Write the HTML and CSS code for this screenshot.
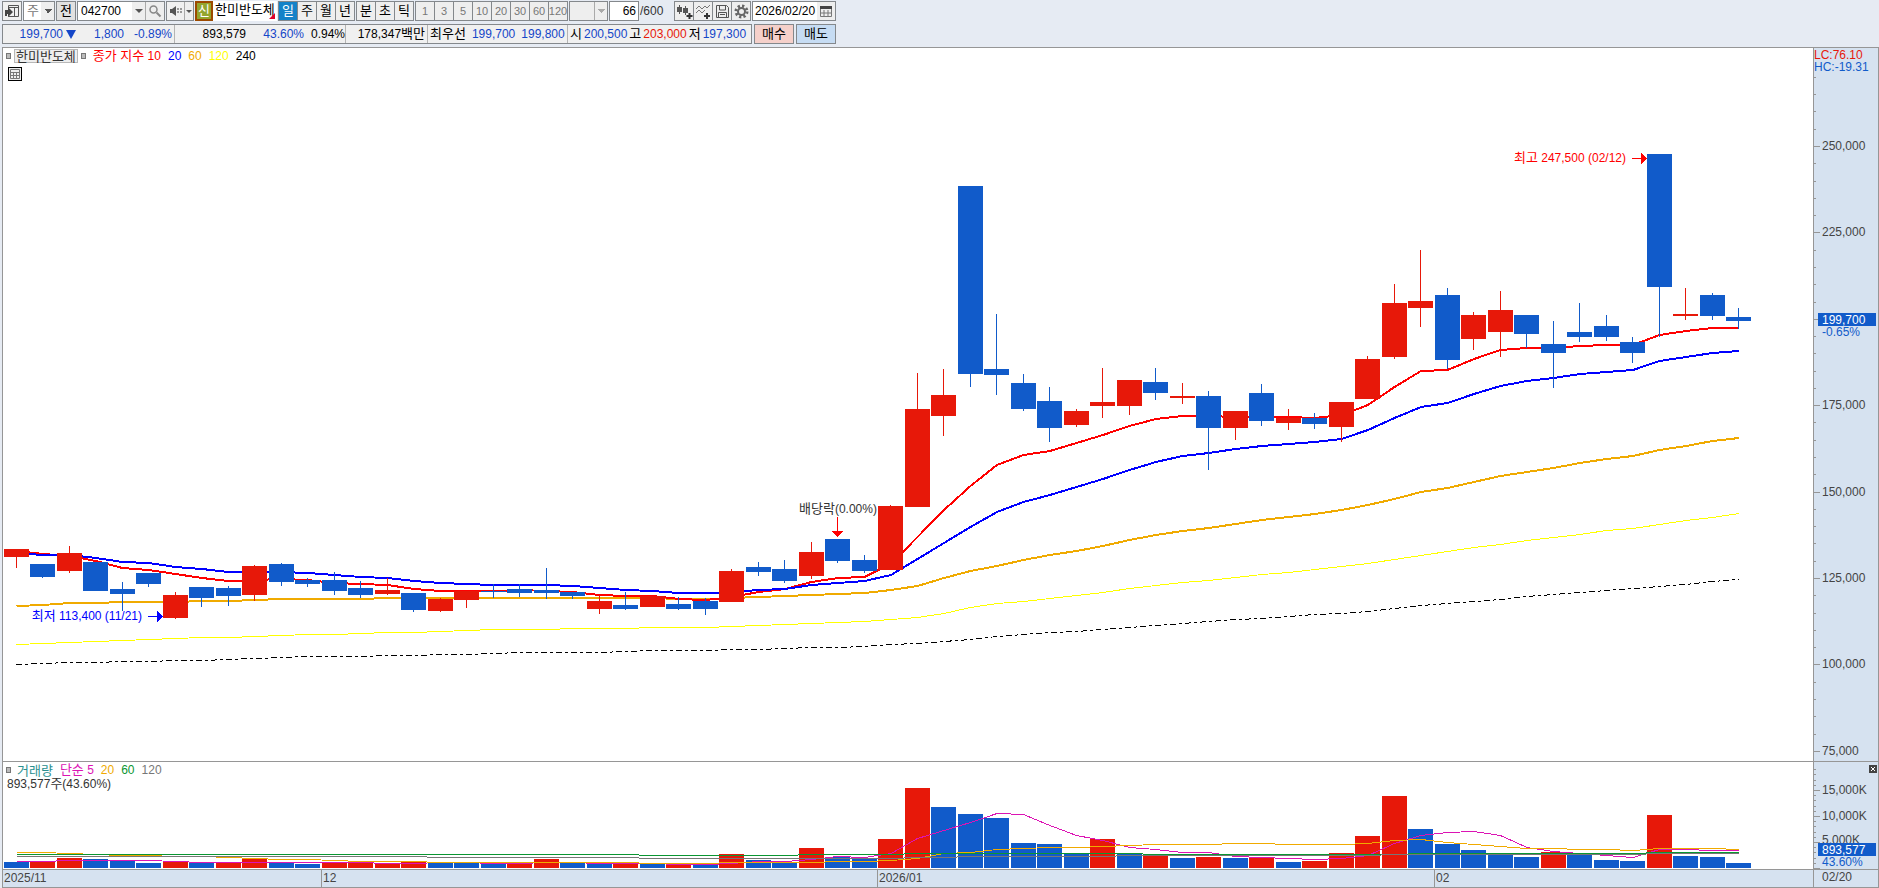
FILE: index.html
```html
<!DOCTYPE html>
<html lang="ko">
  <head>
    <meta charset="utf-8">
    <title>한미반도체 042700</title>
    <link rel="stylesheet" href="styles.css">
  </head>
  <body>
    <header class="toolbar">
      <div class="row">
        <button class="box icon" aria-label="창">
          <svg width="16" height="16" viewBox="0 0 16 16"><path d="M4.5 5V2.500h10v11h-10V12M5 4.500h9M10.500 5v8" fill="none" stroke="#555"/><path d="M1 13V7h3V4l5 5-5 5v-3H3v2z" fill="#444"/></svg>
        </button>
        <select class="box market" aria-label="시장"><option>주</option></select>
        <button class="box key">전</button>
        <div class="box code">
          <input type="text" value="042700" aria-label="종목코드">
          <button class="drop" aria-label="종목 목록"></button>
          <button class="search" aria-label="검색">
            <svg width="14" height="14" viewBox="0 0 14 14"><circle cx="5.5" cy="5.5" r="3.5" fill="none" stroke="#888" stroke-width="1.5"/><path d="M8.5 8.5l4 4" stroke="#888" stroke-width="2"/></svg>
          </button>
        </div>
        <div class="box sound">
          <button class="mute" aria-label="소리">
            <svg width="14" height="12" viewBox="0 0 14 12"><path d="M1 4h2l4-3v10L3 8H1z" fill="#555"/><path d="M8 4h2M8 7h2M11 4h2M11 7h2" stroke="#999" stroke-width="2"/></svg>
          </button>
          <button class="drop" aria-label="소리 설정"></button>
        </div>
        <div class="stock">
          <span class="badge">신</span>
          <span class="name">한미반도체</span>
        </div>
        <div class="group">
          <button class="on">일</button><button>주</button><button>월</button><button>년</button>
        </div>
        <div class="group">
          <button>분</button><button>초</button><button>틱</button>
        </div>
        <div class="group muted">
          <button>1</button><button>3</button><button>5</button><button>10</button><button>20</button><button>30</button><button>60</button><button>120</button>
        </div>
        <select class="box unit" aria-label="단위" disabled><option></option></select>
        <label class="count"><input class="box" type="text" value="66" aria-label="표시 봉수"><span>/600</span></label>
        <div class="tools">
          <button aria-label="봉 추가">
            <svg width="17" height="17" viewBox="0 0 17 17"><path d="M3.5 2v9M9.5 3v9" stroke="#555"/><path d="M1 4h5v5H1zM7 5h5v5H7z" fill="#555"/><path d="M13.500 10v6M10.500 13h6" stroke="#333" stroke-width="2"/></svg>
          </button>
          <button aria-label="지표 추가">
            <svg width="17" height="17" viewBox="0 0 17 17"><path d="M1 6l3-3 3 3 3-3 2 2 3-3M1 10l3-3 3 3 3-3" fill="none" stroke="#777"/><path d="M12 10v6M9 13h6" stroke="#333" stroke-width="2"/></svg>
          </button>
          <button aria-label="저장">
            <svg width="17" height="17" viewBox="0 0 17 17"><path d="M2.5 2.500h10l2 2v10h-12zM5.500 3v4h6V3M4.500 14V9.500h8V14M6 11.500h5" fill="none" stroke="#555"/></svg>
          </button>
          <button aria-label="설정">
            <svg width="17" height="17" viewBox="0 0 17 17"><circle cx="8.5" cy="8.5" r="5.5" fill="none" stroke="#666" stroke-width="3" stroke-dasharray="2.2 2.1"/><circle cx="8.5" cy="8.5" r="3.5" fill="none" stroke="#666" stroke-width="2"/></svg>
          </button>
        </div>
        <div class="box date">
          <input type="text" value="2026/02/20" aria-label="날짜">
          <button class="calendar" aria-label="달력">
            <svg width="12" height="12" viewBox="0 0 12 12"><path d="M.5 1.500h11v10H.5zM4 5v6M8 5v6M1 8h10" fill="none" stroke="#777"/><path d="M0 1h12v3H0z" fill="#444"/></svg>
          </button>
        </div>
      </div>

      <div class="row">
        <div class="box quote">
          <div class="cell trade down">
            <span class="w-price">199,700</span><i class="triangle"></i><span class="w-change">1,800</span><span class="w-change">-0.89%</span>
          </div>
          <div class="cell volume">
            <span class="w-volume">893,579</span><span class="w-rate down">43.60%</span><span class="w-turn">0.94%</span>
          </div>
          <div class="cell amount">178,347<span class="ko">백만</span></div>
          <div class="cell best"><span class="ko">최우선</span><span class="down">199,700</span><span class="down">199,800</span></div>
          <div class="cell ohl">
            <span class="ko">시</span><span class="down">200,500</span><span class="ko">고</span><span class="up">203,000</span><span class="ko">저</span><span class="down">197,300</span>
          </div>
        </div>
        <button class="box order buy">매수</button>
        <button class="box order sell">매도</button>
      </div>
    </header>

    <main class="chart">
      <section class="panel">
        <svg class="plot" id="price-plot"></svg>
        <div class="legend">
          <i class="knob"></i><span class="tag ko">한미반도체</span><i class="knob"></i>
          <span class="ma10"><span class="ko">종가 지수</span> 10</span><span class="ma20">20</span><span class="ma60">60</span><span class="ma120">120</span><span>240</span>
        </div>
        <button class="grid-button" aria-label="표 보기">
          <svg width="10" height="10" viewBox="0 0 10 10"><path d="M.5.5h9v9h-9zM0 3.500h10M0 6.500h10M3.500 3v7M6.500 3v7" fill="none" stroke="#777"/></svg>
        </button>
      </section>
      <section class="axis"><svg class="plot" id="price-axis"></svg></section>

      <section class="panel">
        <svg class="plot" id="volume-plot"></svg>
        <div class="legend">
          <i class="knob"></i><span class="vol-title ko">거래량</span><span class="vol5"><span class="ko">단순</span> 5</span><span class="ma60">20</span><span class="vol60">60</span><span class="vol120">120</span>
        </div>
        <div class="vol-value">893,577<span class="ko">주</span>(43.60%)</div>
      </section>
      <section class="axis">
        <svg class="plot" id="volume-axis"></svg>
        <button class="close" aria-label="닫기"><svg width="8" height="8" viewBox="0 0 8 8"><path d="M2 2l4 4M6 2l-4 4" stroke="#fff"/></svg></button>
      </section>

      <section class="axis"><svg class="plot" id="date-axis"></svg></section>
      <section class="axis last-date">02/20</section>
    </main>
    <script src="script.js"></script>
  </body>
</html>
```
FILE: styles.css
```css
* {
  box-sizing: border-box;
}

body {
  margin: 0;
  min-height: 100vh;
  display: flex;
  flex-direction: column;
  background: #e6ebf3;
  color: #000;
  font-family: "Liberation Sans", "Noto Sans CJK KR", sans-serif;
  font-size: 12px;
  line-height: 16px;
}

button,
input,
select {
  margin: 0;
  padding: 0;
  border: 0;
  border-radius: 0;
  background: transparent;
  color: inherit;
  font: inherit;
}

button {
  display: flex;
  align-items: center;
  justify-content: center;
}

svg {
  display: block;
}

/* Hangul runs a size larger than the digits beside it */
.ko,
.key,
.market,
.stock,
.group,
.order {
  font-size: 13px;
}

/* toolbar */

.toolbar {
  display: flex;
  flex-direction: column;
  gap: 3px;
  height: 47px;
  padding: 1px 0 0 2px;
}

.row {
  display: flex;
  gap: 1px;
  height: 20px;
  white-space: nowrap;
}

.row > * {
  flex-shrink: 0;
}

.box {
  display: flex;
  align-items: center;
  height: 20px;
  border: 1px solid #84888c;
  background-color: #f0f0f0;
}

.icon,
.key {
  width: 20px;
}

.key {
  background: #e1e1e1;
}

.market {
  width: 32px;
  padding-left: 3px;
  appearance: none;
  color: #777;
  background:
    conic-gradient(from -45deg at 50% 100%, #555 90deg, transparent 0) no-repeat 20px 7px / 8px 4px,
    linear-gradient(90deg, #fff 17px, #eee 17px);
}

.drop {
  width: 13px;
  height: 18px;
  background: #eee;
}

.drop::after {
  content: "";
  border: 4px solid transparent;
  border-top-color: #555;
  border-bottom: 0;
}

.code {
  width: 88px;
  background: #fff;
}

.code input {
  width: 54px;
  padding-left: 3px;
}

.search {
  width: 19px;
  height: 18px;
  border-left: 1px solid #aaa;
  background: #eee;
}

.sound {
  width: 28px;
}

.mute {
  width: 17px;
}

.sound .drop {
  width: 9px;
  border-left: 1px solid #aaa;
}

.sound .drop::after {
  border-width: 3px 3px 0;
}

.stock {
  display: flex;
  position: relative;
  width: 82px;
  background: #fff;
}

.badge {
  width: 18px;
  border: 2px solid #9c4a00;
  background: #93a52e;
  color: #fff;
  text-align: center;
}

.name {
  padding: 1px 0 0 2px;
}

.stock::after {
  content: "";
  position: absolute;
  right: 2px;
  bottom: 2px;
  border: 3px solid #e0002a;
  border-top-color: transparent;
  border-left-color: transparent;
}

.group {
  display: flex;
  gap: 1px;
  padding: 1px;
  background: #84888c;
}

.group button {
  width: 18px;
  background: #eee;
}

.group .on {
  background: #1482c8;
  color: #fff;
}

.muted button {
  color: #777;
  font-size: 11px;
}

.unit {
  width: 39px;
  appearance: none;
  opacity: 1;
  background:
    conic-gradient(from -45deg at 50% 100%, #aaa 90deg, transparent 0) no-repeat 27px 7px / 8px 4px,
    linear-gradient(90deg, #eee 24px, #aaa 24px 25px, #eee 25px);
}

.count {
  display: flex;
  align-items: center;
  width: 64px;
  gap: 1px;
  color: #333;
}

.count input {
  width: 30px;
  background: #fff;
  padding-right: 2px;
  text-align: right;
  color: #000;
}

.tools {
  display: flex;
  gap: 1px;
  padding: 1px;
  width: 77px;
  background: #84888c;
}

.tools button {
  width: 18px;
  background: #eee;
}

.date {
  width: 84px;
  background: #fff;
}

.date input {
  width: 64px;
  padding-left: 2px;
}

.calendar {
  width: 18px;
  height: 18px;
  background: #eee;
}

/* quote line */

.quote {
  width: 750px;
  align-items: stretch;
  margin-right: 1px;
}

.cell {
  display: flex;
  flex-shrink: 0;
  align-items: center;
  border-right: 1px solid #b4b4b4;
  text-align: right;
}

.cell:last-child {
  border-right: 0;
}

.down {
  color: #1446c8;
}

.up {
  color: #e71809;
}

.trade {
  width: 172px;
}

.triangle {
  margin-left: 3px;
  border: 5px solid transparent;
  border-top: 9px solid #1446c8;
  border-bottom: 0;
}

.w-price {
  width: 60px;
}

.w-change {
  width: 48px;
}

.volume {
  width: 171px;
}

.w-volume {
  width: 71px;
}

.w-rate {
  width: 58px;
}

.w-turn {
  width: 41px;
}

.amount {
  width: 82px;
  justify-content: flex-end;
  padding-right: 2px;
}

.best {
  width: 140px;
  gap: 6px;
  padding-left: 2px;
}

.ohl {
  gap: 2px;
  padding-left: 2px;
}

.order {
  width: 40px;
  margin-right: 1px;
}

.buy {
  background: #f5d0ca;
}

.sell {
  background: #c6dcf3;
}

/* chart */

.chart {
  flex: 1;
  display: grid;
  grid-template-columns: minmax(0, 1fr) 64px;
  grid-template-rows: minmax(0, 713fr) minmax(0, 107fr) 17px;
  gap: 1px;
  margin-left: 2px;
  padding: 1px;
  background: #969696;
  line-height: 13px;
}

.panel,
.axis {
  position: relative;
  background: #fff;
}

.axis {
  background: #d6e2f0;
  color: #444;
}

.plot {
  position: absolute;
  inset: 0;
  width: 100%;
  height: 100%;
  shape-rendering: crispEdges;
}

.legend {
  position: relative;
  display: flex;
  align-items: center;
  gap: 7px;
  height: 15px;
  padding: 1px 0 0 3px;
  white-space: nowrap;
}

.knob {
  width: 5px;
  height: 6px;
  border: 1px solid #777;
  background: #bbb;
}

.tag {
  display: flex;
  align-items: center;
  margin: 0 -4px;
  padding: 0 1px;
  height: 14px;
  border: 1px solid #b8b8b8;
  background: #eee;
  color: #333;
}

.ma10 {
  color: #f00;
}

.ma20 {
  color: #00f;
}

.ma60 {
  color: #f0aa00;
}

.ma120 {
  color: #ff0;
}

.vol-title {
  margin-left: -1px;
  color: #2a9090;
}

.vol5 {
  color: #dc14b4;
}

.vol60 {
  color: #0a9632;
}

.vol120 {
  color: #777;
}

.vol-value {
  position: relative;
  padding-left: 4px;
  color: #333;
}

.grid-button {
  position: relative;
  width: 14px;
  height: 14px;
  margin: 4px 0 0 5px;
  border: 1px solid #000;
  background: #eee;
}

.close {
  position: absolute;
  top: 3px;
  right: 1px;
  width: 8px;
  height: 8px;
  background: #444;
}

.last-date {
  padding: 1px 0 0 8px;
}

/* drawing */

.rise {
  fill: #e71809;
}

.fall {
  fill: #115bca;
}

.line {
  fill: none;
  stroke-width: 2;
}

.thin {
  stroke-width: 1;
}

.s-red { stroke: #f00; }
.s-blue { stroke: #00f; }
.s-orange { stroke: #f0aa00; }
.s-yellow { stroke: #ff0; }
.s-black { stroke: #000; stroke-dasharray: 6 3 3 3; }
.s-pink { stroke: #dc14b4; }
.s-green { stroke: #0a9632; }
.s-grey { stroke: #777; }

.tick {
  fill: #969696;
}

.t-axis { fill: #444; }
.t-red { fill: #f00; }
.t-blue { fill: #00f; }
.t-dark { fill: #333; }
.t-white { fill: #fff; }
.t-rise { fill: #e71809; }
.t-fall { fill: #115bca; }
```
FILE: script.js
```js
const NS = "http://www.w3.org/2000/svg";

// direction, high, body top, body bottom, low
const candles = [
  ["r", 549, 549, 557, 568], ["b", 564, 564, 577, 578], ["r", 546, 553, 571, 573], ["b", 562, 562, 591, 591],
  ["b", 582, 589, 594, 611], ["b", 573, 573, 584, 587], ["r", 592, 595, 618, 619], ["b", 587, 587, 598, 607],
  ["b", 586, 588, 596, 606], ["r", 565, 566, 595, 601], ["b", 563, 564, 582, 586], ["b", 578, 580, 584, 587],
  ["b", 572, 580, 591, 595], ["b", 581, 588, 595, 598], ["r", 578, 590, 594, 595], ["b", 593, 593, 610, 612],
  ["r", 598, 599, 611, 612], ["r", 591, 591, 600, 608], ["b", 584, 591, 592, 598], ["b", 584, 589, 593, 597],
  ["b", 568, 590, 593, 599], ["b", 592, 592, 596, 599], ["r", 595, 601, 609, 614], ["b", 592, 605, 609, 610],
  ["r", 596, 596, 607, 607], ["b", 597, 604, 609, 610], ["b", 598, 601, 609, 615], ["r", 569, 571, 602, 602],
  ["b", 562, 567, 572, 576], ["b", 560, 569, 581, 583], ["r", 542, 552, 576, 579], ["b", 539, 539, 561, 563],
  ["b", 555, 560, 571, 573], ["r", 505, 506, 570, 570], ["r", 373, 409, 507, 507], ["r", 369, 395, 416, 436],
  ["b", 186, 186, 374, 387], ["b", 314, 369, 375, 395], ["b", 374, 383, 409, 411], ["b", 387, 401, 428, 442],
  ["r", 409, 411, 425, 427], ["r", 368, 402, 406, 418], ["r", 380, 380, 406, 415], ["b", 368, 382, 393, 400],
  ["r", 383, 396, 398, 404], ["b", 391, 396, 428, 470], ["r", 411, 411, 428, 440], ["b", 384, 393, 421, 426],
  ["r", 409, 418, 423, 430], ["b", 413, 418, 424, 429], ["r", 402, 402, 427, 442], ["r", 356, 359, 399, 399],
  ["r", 284, 303, 357, 359], ["r", 250, 301, 308, 327], ["b", 288, 295, 360, 369], ["r", 312, 315, 339, 350],
  ["r", 291, 310, 332, 357], ["b", 315, 315, 334, 348], ["b", 321, 344, 353, 388], ["b", 303, 332, 337, 342],
  ["b", 315, 326, 337, 341], ["b", 337, 342, 353, 363], ["b", 154, 154, 287, 337], ["r", 288, 314, 316, 320],
  ["b", 293, 295, 316, 320], ["b", 308, 317, 321, 329],
];

const averages = {
  "thin s-black": [664, 663, 662, 662, 661, 661, 660, 660, 659, 658, 657, 656, 656, 656, 655, 655, 654, 654, 653, 652, 652, 652, 652, 651, 650, 650, 650, 649, 649, 648, 647, 647, 646, 644, 643, 641, 639, 636, 634, 632, 631, 629, 627, 625, 623, 621, 619, 618, 616, 614, 613, 611, 608, 605, 603, 601, 599, 596, 594, 592, 590, 588, 586, 584, 581, 579],
  "thin s-yellow": [644, 643, 642, 641, 640, 639, 638, 637, 637, 636, 635, 634, 634, 633, 632, 632, 631, 630, 629, 629, 629, 628, 628, 628, 627, 627, 627, 626, 625, 624, 623, 622, 621, 619, 617, 613, 607, 603, 601, 598, 595, 592, 588, 585, 582, 580, 577, 574, 572, 569, 566, 563, 559, 555, 551, 547, 544, 540, 537, 534, 530, 528, 524, 520, 517, 513],
  "s-orange": [606, 605, 603, 603, 602, 602, 602, 601, 601, 600, 599, 599, 599, 599, 598, 598, 598, 598, 598, 598, 598, 598, 598, 598, 598, 599, 599, 598, 597, 596, 595, 594, 593, 590, 586, 578, 571, 566, 560, 555, 551, 546, 540, 535, 531, 528, 524, 520, 517, 514, 510, 505, 499, 492, 488, 482, 476, 472, 468, 463, 459, 456, 450, 446, 441, 438],
  "s-red": [551, 554, 556, 561, 568, 570, 574, 578, 581, 580, 579, 580, 583, 584, 585, 589, 591, 591, 591, 590, 591, 592, 595, 596, 596, 599, 600, 597, 592, 589, 582, 578, 577, 564, 537, 510, 486, 465, 455, 451, 443, 435, 426, 419, 416, 416, 417, 417, 417, 418, 415, 405, 387, 371, 370, 359, 350, 348, 348, 346, 345, 345, 335, 331, 328, 328],
  "s-blue": [553, 555, 555, 558, 562, 563, 567, 569, 572, 572, 572, 573, 575, 577, 578, 581, 583, 584, 585, 585, 585, 586, 588, 590, 591, 593, 593, 592, 590, 589, 585, 583, 581, 575, 559, 543, 527, 512, 502, 495, 487, 479, 470, 462, 456, 453, 449, 446, 444, 442, 439, 430, 418, 407, 403, 394, 386, 381, 378, 374, 372, 370, 361, 357, 353, 351],
};

// colour follows the change against the previous day's volume
const volumeColors = "brrbbbrbrrbbrrrrbbbrrbbrbrbrbbrbbrrbbbbbbrbrbrbrbrrrrbbbbbrbbbrbbb";
const volumes = [862, 862, 858, 859, 861, 863, 861, 862, 862, 858, 862, 864, 862, 862, 863, 862, 862, 862, 863, 863, 859, 863, 863, 863, 864, 864, 865, 854, 860, 862, 848, 857, 859, 839, 788, 807, 814, 818, 843, 844, 853, 839, 854, 855, 858, 857, 858, 858, 862, 861, 853, 836, 796, 829, 844, 850, 855, 857, 852, 854, 860, 861, 815, 856, 857, 863];

const volumeAverages = {
  "s-pink": [861, 861, 860, 860, 860, 860, 861, 862, 862, 862, 862, 862, 862, 862, 863, 863, 862, 862, 863, 863, 862, 862, 863, 863, 863, 864, 864, 863, 861, 861, 859, 856, 857, 853, 838, 830, 822, 813, 814, 825, 835, 840, 847, 849, 852, 852, 856, 857, 858, 859, 858, 855, 843, 835, 832, 831, 835, 847, 851, 853, 855, 857, 849, 849, 850, 850],
  "s-orange": [852, 852, 853, 854, 855, 855, 856, 856, 857, 858, 859, 859, 860, 861, 861, 861, 862, 862, 862, 862, 862, 862, 862, 862, 863, 863, 863, 862, 862, 862, 862, 861, 861, 860, 858, 853, 852, 849, 848, 847, 847, 846, 845, 844, 844, 844, 843, 843, 844, 844, 844, 843, 840, 839, 842, 844, 846, 848, 848, 849, 849, 850, 848, 848, 848, 849],
  "s-green": [...Array(24).fill(854), ...Array(6).fill(855), ...Array(4).fill(854), ...Array(9).fill(853), ...Array(10).fill(854), ...Array(9).fill(853), ...Array(4).fill(852)],
  "s-grey": [...Array(16).fill(856), ...Array(8).fill(857), ...Array(10).fill(858), ...Array(2).fill(857), ...Array(6).fill(856), ...Array(10).fill(855), ...Array(10).fill(854), ...Array(4).fill(853)],
};

function add(parent, name, attrs, text) {
  const el = document.createElementNS(NS, name);
  for (const key in attrs) el.setAttribute(key, attrs[key]);
  if (text) el.textContent = text;
  parent.appendChild(el);
  return el;
}

function rect(svg, cls, x, y, width, height) {
  add(svg, "rect", { class: cls, x, y, width, height });
}

function label(svg, cls, x, y, text, anchor = "start") {
  const el = add(svg, "text", { class: cls, x, y, "text-anchor": anchor });
  for (const part of text.match(/[가-힣]+|[^가-힣]+/g)) {
    add(el, "tspan", /[가-힣]/.test(part) ? { class: "ko" } : {}, part);
  }
}

// clears the svg and returns a vertical scale for it
function prepare(id, top, span) {
  const svg = document.getElementById(id);
  svg.replaceChildren();
  const y = (v) => ((v - top) * svg.clientHeight) / span;
  return { svg, y, width: svg.clientWidth };
}

function drawLine(svg, cls, values, x, y) {
  const shift = cls.includes("thin") ? 0.5 : 0;
  const points = values.map((v, i) => `${x(i)},${y(v) + shift}`).join(" ");
  add(svg, "polyline", { class: "line " + cls, points });
}

function draw() {
  const price = prepare("price-plot", 48, 713);
  const ratio = price.width / 1810;
  const x = (i) => (13.5 + 26.5 * i) * ratio;
  const bar = Math.round(25 * ratio);
  const left = (i) => Math.floor(x(i) - bar / 2);
  const cls = (c) => (c === "r" ? "rise" : "fall");

  for (const key in averages) drawLine(price.svg, key, averages[key], x, price.y);
  candles.forEach(([dir, high, top, bottom, low], i) => {
    const y = price.y;
    rect(price.svg, cls(dir), left(i), y(top), bar, y(bottom) - y(top));
    rect(price.svg, cls(dir), left(i) + Math.floor(bar / 2), y(high), 1, y(low) - y(high));
  });

  // highest, lowest and ex-dividend marks
  const mark = (i, v, color, text) => {
    const end = left(i);
    const y = price.y(v);
    label(price.svg, "t-" + color, end - 21, y + 4, text, "end");
    add(price.svg, "path", { class: "t-" + color, d: `M${end - 15} ${y}h9v-5l6 5.5-6 5.5v-5h-9z` });
  };
  mark(62, 158, "red", "최고 247,500 (02/12)");
  mark(6, 616, "blue", "최저 113,400 (11/21)");
  label(price.svg, "t-dark", x(31), price.y(513), "배당락(0.00%)", "middle");
  const dy = price.y(517);
  add(price.svg, "path", { class: "t-red", d: `M${left(31) + 12} ${dy}h1v14h5l-5.5 6-5.5-6h5z` });

  const volume = prepare("volume-plot", 762, 107);
  volumes.forEach((v, i) => {
    const y = volume.y(v);
    rect(volume.svg, cls(volumeColors[i]), left(i), y, bar, volume.y(868) - y);
  });
  for (const key in volumeAverages) drawLine(volume.svg, "thin " + key, volumeAverages[key], x, volume.y);

  const pa = prepare("price-axis", 48, 713);
  for (let n = -4; n <= 35; n++) {
    const v = Math.round(146 + n * 17.28);
    const major = n % 5 === 0;
    rect(pa.svg, "tick", 0, pa.y(v), major ? 6 : 2, 1);
    // the current price box covers the 200,000 label
    if (major && n !== 10) {
      label(pa.svg, "t-axis", 8, pa.y(v) + 4, (250000 - n * 5000).toLocaleString("en-US"));
    }
  }
  label(pa.svg, "t-rise", 0, pa.y(59), "LC:76.10");
  label(pa.svg, "t-fall", 0, pa.y(71), "HC:-19.31");
  label(pa.svg, "t-fall", 8, pa.y(336), "-0.65%");
  rect(pa.svg, "fall", 4, pa.y(313), 58, 13);
  label(pa.svg, "t-white", 8, pa.y(324), "199,700");

  const va = prepare("volume-axis", 762, 107);
  for (let n = -4; n <= 15; n++) {
    rect(va.svg, "tick", 0, va.y(Math.round(790 + n * 5.2)), n % 5 === 0 ? 6 : 2, 1);
  }
  label(va.svg, "t-axis", 8, va.y(794), "15,000K");
  label(va.svg, "t-axis", 8, va.y(820), "10,000K");
  label(va.svg, "t-axis", 8, va.y(844), "5,000K");
  label(va.svg, "t-fall", 8, va.y(866), "43.60%");
  rect(va.svg, "fall", 4, va.y(843), 58, 13);
  label(va.svg, "t-white", 8, va.y(854), "893,577");

  const dates = prepare("date-axis", 0, 17);
  label(dates.svg, "t-axis", 1, 12, "2025/11");
  [[12, "12"], [33, "2026/01"], [54, "02"]].forEach(([i, text]) => {
    rect(dates.svg, "tick", left(i) - 1, 0, 1, 17);
    label(dates.svg, "t-axis", left(i) + 1, 12, text);
  });
}

window.addEventListener("resize", draw);
draw();
```
